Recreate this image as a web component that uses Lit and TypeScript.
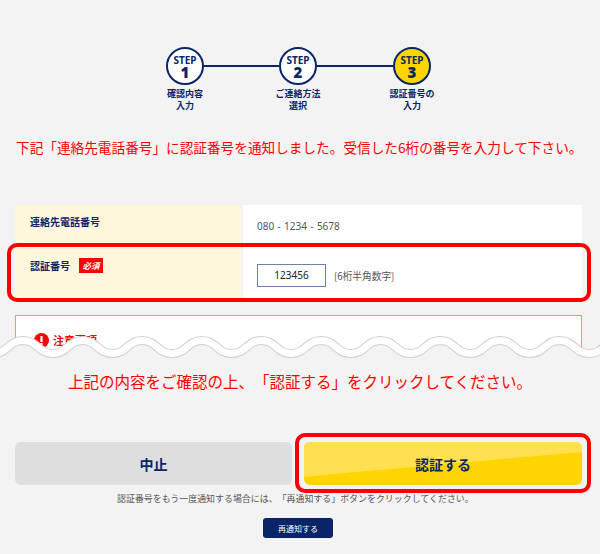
import { LitElement, html, css, svg } from 'lit';
import { customElement } from 'lit/decorators.js';

// wavy tear edge: crests start at x=23, one period is 59.6px
function wavePath() {
    const half = 29.8;
    let x = 23 - half * 2;
    let d = `M${x} 5.5`;
    let up = true;
    while (x < 620) {
        const y = up ? 18.5 : 5.5;
        d += ` C${x + half / 2} ${up ? 5.5 : 18.5} ${x + half / 2} ${y} ${x + half} ${y}`;
        x += half;
        up = !up;
    }
    return d;
}

@customElement('app-root')
export class AppRoot extends LitElement {
    static styles = css`
        :host {
            display: block;
            width: 600px;
            height: 554px;
            overflow: hidden;
            background: #f3f3f3;
            font-family: "Noto Sans CJK JP", "Noto Sans", sans-serif;
            color: #0a2468;
            text-spacing-trim: space-all;
        }

        .steps {
            display: grid;
            grid-template-columns: 38px 75px 38px 76px 38px;
            row-gap: 3px;
            padding: 47px 0 0 166px;
        }

        .circle {
            box-sizing: border-box;
            width: 38px;
            height: 38px;
            padding-top: 1px;
            border: 2px solid #0a2468;
            border-radius: 50%;
            background: #fff;
            display: flex;
            flex-direction: column;
            align-items: center;
            justify-content: center;
            font-family: "Noto Sans", sans-serif;
            font-weight: 700;
        }

        .circle.on {
            background: #ffd500;
        }

        .circle small {
            font-size: 10px;
            line-height: 10px;
        }

        .circle b {
            font-size: 15px;
            line-height: 14px;
        }

        .line {
            align-self: center;
            height: 2px;
            background: #0a2468;
        }

        .label {
            justify-self: center;
            white-space: nowrap;
            text-align: center;
            font-size: 9px;
            line-height: 12px;
            font-weight: 700;
        }

        .lead {
            margin: 25px 0 0;
            padding-left: 16px;
            height: 20px;
            font-size: 13.65px;
            line-height: 20px;
            color: #ff0000;
            white-space: nowrap;
        }

        .form {
            position: relative;
            margin: 48px 18px 0 15px;
        }

        .row {
            display: grid;
            grid-template-columns: 226px 1fr;
            column-gap: 2px;
        }

        .row.tel {
            height: 43px;
        }

        .row.code {
            height: 50px;
        }

        .head {
            background: #fff8dc;
            padding-left: 15px;
            display: flex;
            gap: 9px;
            align-items: flex-start;
            font-size: 10px;
            font-weight: 700;
        }

        .tel .head {
            padding-top: 9px;
        }

        .code .head {
            padding-top: 10px;
        }

        .head span {
            line-height: 15px;
        }

        .req {
            width: 24px;
            height: 15px;
            background: #ff0000;
            color: #fff;
            text-align: center;
            font-size: 8.5px;
            font-style: italic;
        }

        .cell {
            background: #fff;
            padding-left: 14px;
            display: flex;
            align-items: center;
            color: #555;
            font-size: 10px;
        }

        .tel .cell {
            word-spacing: 0.75px;
            padding-bottom: 1px;
            font-family: "Noto Sans", sans-serif;
        }

        .code .cell {
            padding-top: 5px;
            gap: 8px;
            font-size: 9.7px;
            white-space: nowrap;
        }

        .input {
            box-sizing: border-box;
            width: 69px;
            height: 23px;
            border: 1px solid #6d80ad;
            background: #fff;
            color: #222;
            font-size: 10px;
            line-height: 21px;
            text-align: center;
            font-family: "Noto Sans", sans-serif;
        }

        .mark {
            position: absolute;
            box-sizing: border-box;
            border: 4px solid #ff0000;
            border-radius: 10px;
            pointer-events: none;
        }

        .form .mark {
            left: -8px;
            right: -9px;
            top: 38px;
            height: 59px;
        }

        .torn {
            position: relative;
            margin-top: 17px;
            height: 45px;
        }

        .notice {
            box-sizing: border-box;
            margin: 0 18px 0 15px;
            height: 45px;
            padding: 17px 0 0 18px;
            border: 1px solid #ff8a8a;
            border-bottom: 0;
            background: #fff;
            display: flex;
            gap: 4px;
            align-items: flex-start;
            color: #ff0000;
            font-size: 11px;
            font-weight: 700;
            line-height: 15px;
        }

        .notice svg {
            flex: none;
        }

        .wave {
            position: absolute;
            left: 0;
            top: 20px;
            display: block;
        }

        .confirm {
            margin: 0;
            padding-top: 9px;
            height: 24px;
            text-align: center;
            font-size: 15.5px;
            line-height: 24px;
            color: #ff0000;
            white-space: nowrap;
        }

        .actions {
            position: relative;
            display: grid;
            grid-template-columns: 277px 278px;
            column-gap: 12px;
            margin: 49px 0 0 15px;
        }

        .btn {
            height: 43px;
            border-radius: 6px;
            display: flex;
            align-items: center;
            justify-content: center;
            font-size: 14px;
            font-weight: 700;
        }

        .btn.stop {
            background: #dedede;
        }

        .btn.go {
            position: relative;
            background: #ffd500;
            overflow: hidden;
        }

        .btn.go::before {
            content: "";
            position: absolute;
            inset: 0;
            background: #ffe050;
            clip-path: polygon(0 0, 100% 0, 100% 23%, 0 81%);
        }

        .btn.go span {
            position: relative;
        }

        .actions .mark {
            left: 280px;
            top: -9px;
            width: 296px;
            height: 60px;
        }

        .hint {
            margin: 4px 0 0;
            padding-left: 117px;
            height: 20px;
            font-size: 8.95px;
            line-height: 20px;
            color: #555;
            white-space: nowrap;
        }

        .resend {
            display: flex;
            align-items: center;
            justify-content: center;
            width: 70px;
            height: 20px;
            margin: 9px 0 0 263px;
            border-radius: 3px;
            background: #0a2468;
            color: #fff;
            font-size: 8px;
        }
    `;

    render() {
        return html`
            <div class="steps">
                <div class="circle"><small>STEP</small><b>1</b></div>
                <div class="line"></div>
                <div class="circle"><small>STEP</small><b>2</b></div>
                <div class="line"></div>
                <div class="circle on"><small>STEP</small><b>3</b></div>
                <div class="label">確認内容<br />入力</div>
                <div></div>
                <div class="label">ご連絡方法<br />選択</div>
                <div></div>
                <div class="label">認証番号の<br />入力</div>
            </div>

            <p class="lead">下記「連絡先電話番号」に認証番号を通知しました。受信した6桁の番号を入力して下さい。</p>

            <div class="form">
                <div class="row tel">
                    <div class="head"><span>連絡先電話番号</span></div>
                    <div class="cell">080 - 1234 - 5678</div>
                </div>
                <div class="row code">
                    <div class="head"><span>認証番号</span><span class="req">必須</span></div>
                    <div class="cell"><div class="input">123456</div>[6桁半角数字]</div>
                </div>
                <div class="mark"></div>
            </div>

            <div class="torn">
                <div class="notice">
                    <svg width="15" height="15" viewBox="0 0 15 15">
                        <circle cx="7.5" cy="7.5" r="7.5" fill="#ff0000"></circle>
                        <rect x="6.4" y="3" width="2.2" height="6" fill="#fff"></rect>
                        <rect x="6.4" y="10" width="2.2" height="2.2" fill="#fff"></rect>
                    </svg>
                    <span>注意事項</span>
                </div>
                <svg class="wave" width="600" height="26" viewBox="0 0 600 26">
                    ${svg`
                        <path d="${wavePath()} V26 H-40 Z" fill="#f3f3f3"></path>
                        <path d="${wavePath()}" fill="none" stroke="#cfcfcf" stroke-width="9"></path>
                        <path d="${wavePath()}" fill="none" stroke="#fff" stroke-width="7"></path>
                    `}
                </svg>
            </div>

            <p class="confirm">上記の内容をご確認の上、「認証する」をクリックしてください。</p>

            <div class="actions">
                <div class="btn stop">中止</div>
                <div class="btn go"><span>認証する</span></div>
                <div class="mark"></div>
            </div>

            <p class="hint">認証番号をもう一度通知する場合には、「再通知する」ボタンをクリックしてください。</p>
            <div class="resend">再通知する</div>
        `;
    }
}
